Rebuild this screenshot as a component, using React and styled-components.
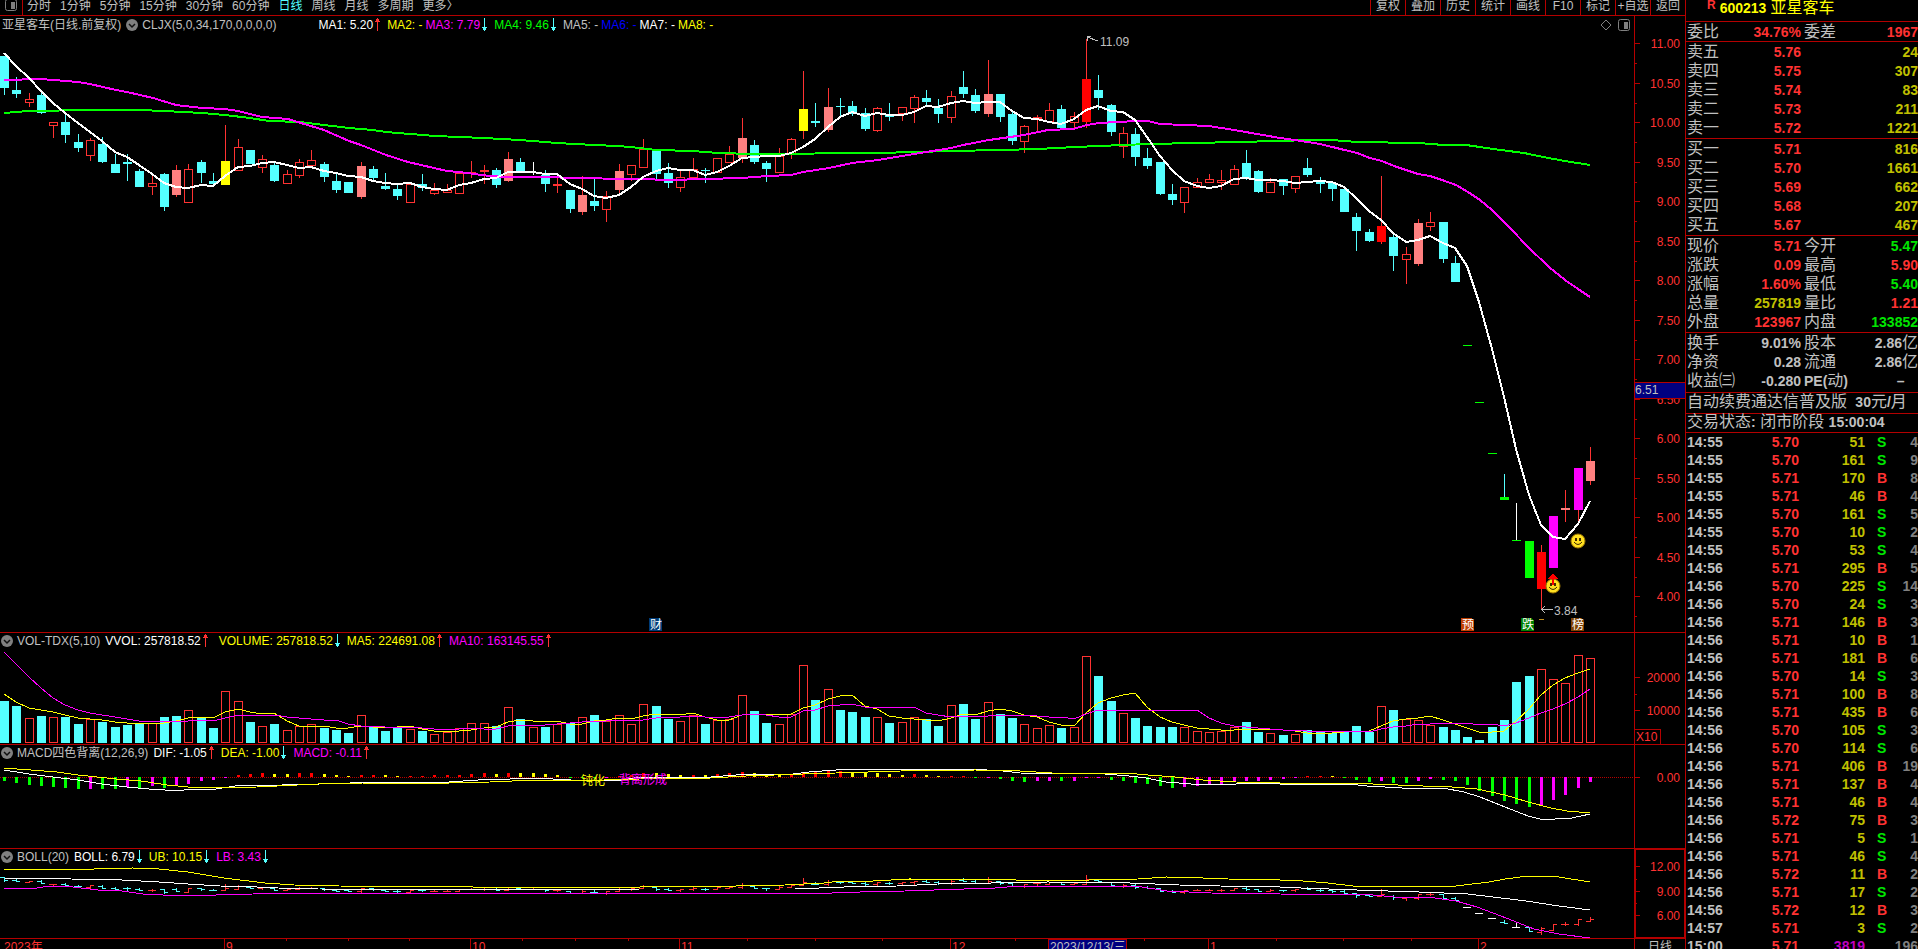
import React from "react";
import styled, { createGlobalStyle } from "styled-components";

const RED = "#ff3232";
const LINE = "#b40000";
const CYAN = "#54ffff";
const PINK = "#ff8080";
const GREY = "#c0c0c0";
const GOLD = "#c0c000";
const GREEN = "#00e600";
const LIME = "#00ff00";
const MAGENTA = "#ff00ff";

const STEP = 12.295;
const cx = (i) => Math.round(4 + i * STEP);

// kind + high, body top, body bottom, low
const candles = `c56,56,88,95 c77,90,94,98 r93,99,102,107 c91,95,113,114 r122,122,125,138
c112,122,135,143 c134,142,148,152 r138,140,155,161 c137,144,162,163 c154,164,173,173
c154,162,164,181 c169,171,187,187 r176,183,186,195 c173,174,207,211 p165,170,195,197
r164,169,202,202 c160,162,173,183 c173,181,184,185 y125,161,185,185 r139,147,170,171
c150,150,164,164 r155,159,167,173 c163,165,181,182 r170,174,183,184 r159,162,175,178
r150,160,165,167 c162,164,177,182 c173,181,190,193 c182,182,193,193 p162,166,197,199
c166,169,178,181 c173,186,189,190 c184,189,196,200 r183,184,202,203 c174,184,188,191
r183,190,193,195 r184,190,192,193 r173,173,193,193 x161,172,174,178 x165,170,172,184
c168,170,185,188 p152,159,181,182 c158,162,172,172 w162,172,173,175 c170,175,184,192
x176,184,186,193 c190,190,209,213 p176,195,212,215 c179,201,206,211 r191,196,209,222
p164,171,190,195 r165,165,174,181 r139,149,167,168 c149,151,174,179 c163,173,183,188
r170,177,187,192 r158,169,177,179 c168,170,171,183 r158,158,172,172 r146,154,162,163
p118,138,158,163 c140,145,162,164 c161,163,169,182 r148,156,172,172 r138,139,153,159
y71,109,131,139 c103,121,123,127 p88,107,130,132 c98,106,107,116 c101,106,114,116
c108,113,129,131 r107,108,130,132 c103,114,117,121 r107,107,113,121 r95,97,108,123
c90,98,102,107 c99,108,114,123 r91,96,117,123 c71,87,94,98 c89,95,111,113
p60,94,114,117 c94,94,117,122 c110,114,141,145 r125,126,141,153 x115,117,119,132
r103,110,121,122 c105,109,128,129 r112,116,122,128 R39,79,122,128 c75,90,98,110
c104,105,132,136 r127,133,146,158 c128,134,157,166 c148,158,166,169 c162,162,194,195
c184,194,200,205 r187,187,202,213 r178,182,187,188 r174,179,182,183 r170,180,182,190
r165,169,184,184 c150,163,178,180 c170,171,192,193 r178,182,192,192 c179,179,186,195
r176,176,188,193 c158,168,175,177 c177,180,184,193 c183,183,189,201 c187,189,212,212
c213,217,231,251 c229,232,241,242 R176,226,242,244 c235,237,256,271 r247,254,259,284
p219,223,264,266 r212,222,226,231 c222,222,259,263 c256,263,282,282 g345,345,346,346
g402,402,403,403 g453,453,454,454 C474,497,500,500 W503,540,541,541 g541,541,578,578
R545,552,589,609 m516,516,568,568 P490,508,510,522 m468,468,510,521 p447,461,481,485`
  .split(/\s+/)
  .map((s, i) => {
    const [high, top, bottom, low] = s.slice(1).split(",").map(Number);
    const kind = s[0];
    const down = "cgCW".includes(kind) || i === 14;
    return { kind, high, top, bottom, low, down, close: down ? bottom : top, open: down ? top : bottom };
  });

const volumes = [
  126, 111, 75, 81, 78, 78, 57, 72, 63, 48, 54, 58, 60, 78, 81, 99, 78, 45, 156, 126,
  63, 51, 57, 39, 51, 56, 45, 39, 30, 83, 48, 36, 46, 42, 36, 27, 33, 45, 59, 59,
  51, 107, 72, 48, 48, 58, 60, 77, 84, 66, 83, 57, 116, 111, 72, 66, 83, 57, 69, 71,
  143, 96, 60, 57, 86, 233, 129, 161, 99, 93, 78, 77, 60, 63, 77, 72, 51, 114, 117, 72,
  122, 87, 75, 57, 45, 53, 45, 48, 260, 201, 126, 89, 75, 51, 48, 48, 48, 36, 32, 36,
  48, 63, 33, 29, 24, 27, 39, 33, 29, 32, 51, 32, 110, 99, 71, 68, 53, 48, 39, 18,
  9, 48, 69, 183, 201, 221, 191, 179, 263, 254,
];

// colour + signed length, below the zero line is positive
const macd = `g11 g17 g23 g26 g29 g32 g35 m35 g35 g35 m30 g32 m28 g32 m26 m20 m11 m8 m2 R-7
R-10 R-13 y-10 y-10 R-13 R-13 y-10 y-7 y-4 R-7 R-7 y-7 y-4 R-4 R-4 R-7 R-7 R-7 R-10 R-13
y-10 R-13 y-13 y-13 y-10 y-7 g2 g2 g3 m4 R-3 R-5 R-13 y-13 y-10 y-7 R-7 y-7 R-10 R-13
R-16 y-13 y-7 y-5 R-10 R-16 R-16 R-18 R-19 y-13 y-13 y-13 y-10 y-7 R-10 y-7 y-4 R-4 R-4 g2
m2 g5 g11 g14 m11 m11 g11 m11 m2 m2 g8 g11 g17 g20 g26 g32 m29 m26 m23 m20
m14 m11 m11 m8 m5 m2 R-4 R-4 y-4 g4 g8 g14 m11 g17 g17 m11 m5 g8 g11 g23
g41 g56 g71 g80 g89 m83 m68 m53 m32 m14`
  .split(/\s+/)
  .map((s) => ({ kind: s[0], value: Number(s.slice(1)) }));

const fills = {
  c: CYAN, p: PINK, y: "#ffff00", R: "#ff0000", m: MAGENTA, g: LIME,
  w: "#ffffff", x: RED, C: LIME, W: LIME, P: PINK,
};
const wicks = { c: CYAN, C: CYAN, g: LIME, w: "#ffffff", W: "#ffffff" };

const average = (values, before, n) => {
  const all = [...before, ...values];
  return values.map((_, i) => {
    const end = i + before.length + 1;
    const part = all.slice(Math.max(0, end - n), end);
    return part.reduce((a, b) => a + b, 0) / part.length;
  });
};

const toPoints = (values, scale = (v) => v) =>
  values.map((v, i) => `${cx(i)},${Math.round(scale(v))}`).join(" ");

const ma5 = average(candles.map((c) => c.close), [31, 39, 48, 61], 5);
const earlier = [471, 445, 431, 358, 285, 226, 165, 111, 102];
const volMa5 = average(volumes, earlier, 5);
const volMa10 = average(volumes, earlier, 10);

const ma34 =
  "4,80 41,79 78,82 90,84 116,90 127,92 153,98 176,105 202,108 225,109 238,111 262,117 288,119 301,123 324,130 349,141 361,145 386,155 408,162 447,171 459,172 490,176 506,177 557,177 563,178 640,179 669,180 705,179 742,178 767,176 791,175 803,172 829,168 852,163 878,160 914,154 951,148 963,145 989,140 1024,135 1048,130 1073,129 1087,125 1099,123 1136,121 1148,121 1160,124 1209,126 1234,130 1280,138 1295,140 1320,144 1357,153 1370,158 1382,161 1394,166 1418,174 1430,176 1442,180 1456,185 1468,192 1480,200 1492,210 1510,228 1528,247 1549,267 1565,280 1578,289 1590,297";
const ma170 =
  "4,113 16,112 29,111 90,110 139,110 165,111 202,113 225,115 250,118 269,121 300,122 324,125 349,128 373,130 386,132 435,136 484,138 520,140 557,143 594,145 618,146 640,148 656,150 693,151 718,153 754,154 878,153 952,151 1000,150 1038,149 1075,147 1099,146 1148,144 1197,143 1234,142 1280,141 1308,140 1332,140 1357,142 1418,143 1444,145 1466,145 1480,147 1493,149 1524,153 1543,157 1565,161 1590,165";
const dif =
  "4,770 29,774 53,777 78,780 102,784 127,787 149,789 165,790 184,790 216,789 235,786 282,785 320,784 380,782 449,782 478,780 510,779 535,778 571,780 616,781 640,777 711,777 736,775 793,774 809,772 836,770 852,769 970,769 1003,771 1020,773 1081,774 1105,774 1129,776 1146,778 1166,782 1191,784 1236,784 1252,783 1280,784 1348,784 1367,786 1402,788 1443,788 1464,792 1480,797 1505,807 1528,816 1540,819 1555,819 1572,818 1590,814";
const dea =
  "4,768 57,772 78,775 116,779 141,781 167,785 188,787 216,788 257,787 318,784 363,783 449,783 490,782 535,780 604,780 640,779 711,778 746,776 803,774 836,773 901,771 975,770 1020,771 1052,773 1126,773 1148,775 1175,777 1203,780 1236,782 1280,783 1357,783 1373,784 1423,786 1452,787 1477,789 1505,795 1528,802 1551,808 1567,811 1590,813";
const upper =
  "4,869 94,869 133,868 159,869 188,872 224,878 265,883 294,885 339,886 473,887 640,887 736,886 785,885 824,883 840,881 873,881 909,879 1016,880 1089,880 1138,879 1166,877 1203,878 1228,879 1280,880 1303,881 1328,883 1353,886 1456,886 1489,882 1505,879 1528,876 1559,877 1590,882";
const middle =
  "4,878 71,879 122,880 159,882 188,884 220,886 257,887 278,888 318,889 563,890 640,889 795,889 844,887 897,886 958,883 991,883 1048,882 1130,883 1179,885 1220,886 1280,887 1301,888 1357,890 1419,892 1468,894 1493,897 1526,901 1559,906 1590,910";
const lower =
  "4,888 37,888 49,886 73,887 98,890 122,891 143,894 163,895 216,895 253,894 282,893 640,893 832,893 860,892 905,891 934,890 995,888 1020,886 1118,886 1142,887 1167,891 1211,893 1280,894 1315,895 1342,894 1373,895 1394,897 1435,898 1456,901 1477,907 1501,916 1534,929 1559,934 1590,938";

const Candle = ({ data, x }) => {
  const { kind, high, top, bottom, low } = data;
  const wick = wicks[kind] || RED;
  const doji = kind === "w";
  return (
    <g>
      {high < top && <rect x={x} y={high} width="1" height={top - high} fill={wick} />}
      {low > bottom && <rect x={x} y={bottom} width="1" height={low - bottom} fill={wick} />}
      {kind === "r" ? (
        <rect x={x - 3.5} y={top + 0.5} width="8" height={Math.max(bottom - top, 2)} fill="none" stroke={RED} />
      ) : (
        <rect
          x={doji ? x : x - 4}
          y={top}
          width={doji ? 1 : 9}
          height={Math.max(bottom - top, 1)}
          fill={fills[kind]}
        />
      )}
    </g>
  );
};

const Smiley = ({ x, y }) => (
  <g shapeRendering="auto">
    <circle cx={x} cy={y} r="7" fill="#ffe020" stroke="#a07800" />
    <rect x={x - 3} y={y - 3} width="2" height="3" fill="#402800" />
    <rect x={x + 1} y={y - 3} width="2" height="3" fill="#402800" />
    <path d={`M${x - 4} ${y + 1}q4 5 8 0`} fill="none" stroke="#402800" />
  </g>
);

const Badge = ({ x, y = 618, fill, children }) => (
  <g>
    <path d={`M${x} ${y}h10l3 3v10h-13z`} fill={fill} />
    <text x={x + 1} y={y + 11} fill="#ffffff">{children}</text>
  </g>
);

const PriceChart = () => (
  <Canvas $height={598}>
    <g transform="translate(0 -34)">
      {candles.map((c, i) => <Candle key={i} data={c} x={cx(i)} />)}
      <polyline points={ma170} stroke={LIME} strokeWidth="2" fill="none" />
      <polyline points={ma34} stroke={MAGENTA} strokeWidth="2" fill="none" />
      <polyline points={toPoints(ma5)} stroke="#ffffff" strokeWidth="2" fill="none" />
      <path d="M1098 41L1087 37M1087.5 41V36.5H1091" stroke={GREY} fill="none" />
      <text x="1100" y="46" fill={GREY}>11.09</text>
      <path d="M1541 609.5H1553M1545 606L1541.5 609.5L1545 613" stroke={GREY} fill="none" />
      <text x="1554" y="615" fill={GREY}>3.84</text>
      <Smiley x={1578} y={541} />
      <Smiley x={1553} y={586} />
      <path d="M1553 573l5 6h-4v6h-2v-6h-4z" fill="#ff0000" />
      <rect x="1539" y="619" width="5" height="1" fill="#c09020" />
      <Badge x={649} fill="#003c78">财</Badge>
      <Badge x={1461} fill="#c04000">预</Badge>
      <Badge x={1521} fill="#008000">跌</Badge>
      <Badge x={1571} fill="#804000">榜</Badge>
    </g>
  </Canvas>
);

const VolumeChart = () => (
  <Canvas $height={94}>
    <g transform="translate(0 -650)">
      {volumes.map((v, i) => {
        const h = Math.round(v / 3);
        return candles[i].down ? (
          <rect key={i} x={cx(i) - 4} y={743 - h} width="9" height={h} fill={CYAN} />
        ) : (
          <rect key={i} x={cx(i) - 3.5} y={743.5 - h} width="8" height={h - 1} fill="none" stroke={RED} />
        );
      })}
      <polyline points={toPoints(volMa5, (v) => 743 - v / 3)} stroke="#ffff00" fill="none" />
      <polyline points={toPoints(volMa10, (v) => 743 - v / 3)} stroke={MAGENTA} fill="none" />
    </g>
  </Canvas>
);

const MacdChart = () => (
  <Canvas $height={86}>
    <g transform="translate(0 -762)">
      <line x1="0" x2="1634" y1="777.5" y2="777.5" stroke={LINE} strokeDasharray="1 1" />
      {macd.map(({ kind, value }, i) => {
        const h = Math.max(1, Math.round(Math.abs(value) / 3));
        return <rect key={i} x={cx(i) - 1} y={value > 0 ? 777 : 777 - h} width="3" height={h} fill={fills[kind]} />;
      })}
      <polyline points={dif} stroke="#ffffff" fill="none" />
      <polyline points={dea} stroke="#ffff00" fill="none" />
      <text x="581" y="785" fill="#ffff00">钝化</text>
      <text x="619" y="784" fill={MAGENTA}>背离形成</text>
    </g>
  </Canvas>
);

const bandY = (y) => Math.round(875.5 + (y - 43.3) * 0.1034);

const BollChart = () => (
  <Canvas $height={72}>
    <g transform="translate(0 -866)">
      {candles.map((c, i) => {
        const x = cx(i);
        const color = i > 118 && i < 124 && i !== 122 ? "#ffffff" : c.down ? CYAN : RED;
        const high = bandY(c.high);
        return (
          <g key={i} fill={color}>
            <rect x={x} y={high} width="1" height={bandY(c.low) - high + 1} />
            <rect x={x - 4} y={bandY(c.open)} width="4" height="1" />
            <rect x={x} y={bandY(c.close)} width="4" height="1" />
          </g>
        );
      })}
      <polyline points={middle} stroke="#ffffff" fill="none" />
      <polyline points={upper} stroke="#ffff00" fill="none" />
      <polyline points={lower} stroke={MAGENTA} fill="none" />
    </g>
  </Canvas>
);

const Scale = ({ height, marks, minor = [], children }) => (
  <Canvas $height={height}>
    {marks.map(([label, y]) => (
      <g key={label}>
        <rect x="0" y={y} width="5" height="1" fill={LINE} />
        <text x="45" y={y + 5} textAnchor="end" fill={RED}>{label}</text>
      </g>
    ))}
    {minor.map((y) => <rect key={y} x="0" y={y} width="2" height="1" fill={LINE} />)}
    {children}
  </Canvas>
);

const priceMarks = Array.from({ length: 15 }, (_, i) => [
  (11 - i / 2).toFixed(2),
  Math.round(27 + i * 39.5),
]);
const priceMinor = Array.from({ length: 15 }, (_, i) => Math.round(47 + i * 39.5));

const Arrow = ({ up }) => (
  <svg width="8" height="14" viewBox="0 0 8 14" shapeRendering="crispEdges" aria-hidden="true">
    {up ? (
      <path d="M3 0h1v1h1v2h1v1h-2v9h-1v-9h-2v-1h1v-2h1z" fill={RED} />
    ) : (
      <path d="M3 0h1v9h2v1h-1v2h-1v1h-1v-1h-1v-2h-1v-1h2z" fill={CYAN} />
    )}
  </svg>
);

const Fold = () => (
  <FoldButton aria-label="指标菜单">
    <svg width="12" height="12" viewBox="0 0 12 12">
      <circle cx="6" cy="6" r="6" fill="#808080" />
      <path d="M3 5l3 3 3-3" stroke="#101010" strokeWidth="1.5" fill="none" />
    </svg>
  </FoldButton>
);

const PanelIcon = () => (
  <svg width="12" height="12" viewBox="0 0 12 12" aria-hidden="true">
    <rect x="0.5" y="0.5" width="11" height="11" rx="2" fill="none" stroke="#808080" />
    <rect x="6" y="3" width="4" height="7" fill="#808080" />
  </svg>
);

const Indicators = ({ items }) =>
  items.map(([text, color, dir, space = 5]) => (
    <Value key={text} $color={color} $space={space}>
      {text}
      {dir && <Arrow up={dir === "up"} />}
    </Value>
  ));

const periods = ["分时", "1分钟", "5分钟", "15分钟", "30分钟", "60分钟", "日线", "周线", "月线", "多周期", "更多〉"];
const actions = ["复权", "叠加", "历史", "统计", "画线", "F10", "标记", "+自选", "返回"];

const months = [["9", 224], ["10", 470], ["11", 679], ["12", 950], ["1", 1208], ["2", 1478]];
const weeks = [286, 348, 409, 522, 575, 628, 747, 815, 882, 1015, 1144, 1276, 1343, 1411];

const sells = [["卖五", "5.76", 24], ["卖四", "5.75", 307], ["卖三", "5.74", 83], ["卖二", "5.73", 211], ["卖一", "5.72", 1221]];
const buys = [["买一", "5.71", 816], ["买二", "5.70", 1661], ["买三", "5.69", 662], ["买四", "5.68", 207], ["买五", "5.67", 467]];

const prices = [
  ["现价", "5.71", RED, "今开", "5.47", GREEN],
  ["涨跌", "0.09", RED, "最高", "5.90", RED],
  ["涨幅", "1.60%", RED, "最低", "5.40", GREEN],
  ["总量", "257819", GOLD, "量比", "1.21", RED],
  ["外盘", "123967", RED, "内盘", "133852", GREEN],
];
const basics = [
  ["换手", "9.01%", GREY, "股本", "2.86", GREY, "亿"],
  ["净资", "0.28", GREY, "流通", "2.86", GREY, "亿"],
  ["收益㈢", "-0.280", GREY, <><b>PE(</b>动<b>)</b></>, "–", GREY, "\u00a0\u00a0\u00a0"],
];

const trades = `14:55 5.70 51 S 4|14:55 5.70 161 S 9|14:55 5.71 170 B 8|14:55 5.71 46 B 4|14:55 5.70 161 S 5
14:55 5.70 10 S 2|14:55 5.70 53 S 4|14:56 5.71 295 B 5|14:56 5.70 225 S 14|14:56 5.70 24 S 3
14:56 5.71 146 B 3|14:56 5.71 10 B 1|14:56 5.71 181 B 6|14:56 5.70 14 S 3|14:56 5.71 100 B 8
14:56 5.71 435 B 6|14:56 5.70 105 S 3|14:56 5.70 114 S 6|14:56 5.71 406 B 19|14:56 5.71 137 B 4
14:56 5.71 46 B 4|14:56 5.72 75 B 3|14:56 5.71 5 S 1|14:56 5.71 46 S 4|14:56 5.72 11 B 2
14:56 5.71 17 S 2|14:56 5.72 12 B 3|14:57 5.71 3 S 2|15:00 5.71 3819 - 196`
  .split(/[|\n]/)
  .map((s) => s.split(" "));

const QuoteRows = ({ rows, space = 1 }) => (
  <Quotes $space={space}>
    <colgroup>
      <col width="50" />
      <col width="65" />
      <col width="44" />
      <col />
    </colgroup>
    <tbody>
      {rows.map(([label, value, color, label2, value2, color2, unit], i) => (
        <tr key={i}>
          <Label>{label}</Label>
          <Num $color={color}>{value}</Num>
          <Label $second>{label2}</Label>
          <Num $color={color2}>
            {value2}
            {unit && <Cjk>{unit}</Cjk>}
          </Num>
        </tr>
      ))}
    </tbody>
  </Quotes>
);

const App = () => {
  return (
    <Screen>
      <GlobalStyle />
      <Charts>
        <Toolbar>
          <LayoutButton aria-label="布局"><PanelIcon /></LayoutButton>
          <Periods>
            {periods.map((p) => <Period key={p} $active={p === "日线"}>{p}</Period>)}
          </Periods>
          {actions.map((a) => <Action key={a}>{a}</Action>)}
        </Toolbar>

        <Pane>
          <Plot>
            <Header $tall>
              <Title $first>亚星客车(日线.前复权)</Title>
              <Fold />
              <Title>CLJX(5,0,34,170,0,0,0,0)</Title>
              <Indicators
                items={[
                  ["MA1: 5.20", "#ffffff", "up", 42],
                  ["MA2: -", "#ffff00"],
                  ["MA3: 7.79", MAGENTA, "down", 3],
                  ["MA4: 9.46", LIME, "down"],
                  ["MA5: -", GREY],
                  ["MA6: -", "#0000ff", null, 3],
                  ["MA7: -", "#ffffff", null, 3],
                  ["MA8: -", "#ffff00", null, 3],
                ]}
              />
              <Tools>
                <svg width="12" height="12" viewBox="0 0 12 12" aria-hidden="true">
                  <path d="M6 1l5 5-5 5-5-5z" fill="none" stroke="#808080" />
                </svg>
                <PanelIcon />
              </Tools>
            </Header>
            <PriceChart />
          </Plot>
          <Axis>
            <Scale height={616} marks={priceMarks} minor={priceMinor}>
              <rect x="0" y="366" width="50" height="17" fill={LINE} />
              <rect x="0" y="367" width="50" height="15" fill="#000080" />
              <text x="0" y="378" fill={GREY}>6.51</text>
            </Scale>
          </Axis>
        </Pane>

        <Pane>
          <Plot>
            <Header>
              <Fold />
              <Title>VOL-TDX(5,10)</Title>
              <Indicators
                items={[
                  ["VVOL: 257818.52", "#ffffff", "up"],
                  ["VOLUME: 257818.52", "#ffff00", "down", 9],
                  ["MA5: 224691.08", "#ffff00", "up"],
                  ["MA10: 163145.55", MAGENTA, "up"],
                ]}
              />
            </Header>
            <VolumeChart />
          </Plot>
          <Axis>
            <Scale height={111} marks={[["20000", 44], ["10000", 77]]} minor={[61]}>
              <path d="M0 96.5H25.5V111" stroke={LINE} fill="none" />
              <text x="1" y="108" fill={RED}>X10</text>
            </Scale>
          </Axis>
        </Pane>

        <Pane>
          <Plot>
            <Header>
              <Fold />
              <Title>MACD四色背离(12,26,9)</Title>
              <Indicators
                items={[
                  ["DIF: -1.05", "#ffffff", "up"],
                  ["DEA: -1.00", "#ffff00", "down"],
                  ["MACD: -0.11", MAGENTA, "up"],
                ]}
              />
            </Header>
            <MacdChart />
          </Plot>
          <Axis>
            <Scale height={103} marks={[["0.00", 32]]} />
          </Axis>
        </Pane>

        <Pane>
          <Plot>
            <Header>
              <Fold />
              <Title>BOLL(20)</Title>
              <Indicators
                items={[
                  ["BOLL: 6.79", "#ffffff", "down"],
                  ["UB: 10.15", "#ffff00", "down"],
                  ["LB: 3.43", MAGENTA, "down"],
                ]}
              />
            </Header>
            <BollChart />
          </Plot>
          <Axis $selected>
            <Scale height={87} marks={[["12.00", 17], ["9.00", 42], ["6.00", 66]]} minor={[30, 54]} />
          </Axis>
        </Pane>

        <Pane>
          <Canvas $height={20}>
            {months.map(([m, x]) => (
              <g key={m}>
                <rect x={x} y="0" width="1" height="20" fill={LINE} />
                <text x={x + 2} y="12" fill={RED}>{m}</text>
              </g>
            ))}
            {weeks.map((x) => <rect key={x} x={x} y="0" width="1" height="2" fill={LINE} />)}
            <text x="4" y="12" fill={RED}>2023年</text>
            <rect x="1048" y="0" width="79" height="20" fill={LINE} />
            <rect x="1049" y="1" width="77" height="19" fill="#000080" />
            <text x="1050" y="12" fill={GREY}>2023/12/13/三</text>
          </Canvas>
          <Axis><Cycle>日线</Cycle></Axis>
        </Pane>
      </Charts>

      <Side>
        <Stock>
          <Flag>R</Flag>
          600213
          <Cjk>亚星客车</Cjk>
        </Stock>
        <QuoteRows rows={[["委比", "34.76%", RED, "委差", "1967", RED]]} space={0} />
        <QuoteRows rows={sells.map(([l, p, v]) => [l, p, RED, "", v, GOLD])} />
        <QuoteRows rows={buys.map(([l, p, v]) => [l, p, RED, "", v, GOLD])} />
        <QuoteRows rows={prices} />
        <QuoteRows rows={basics} space={2} />
        <Notice $height={20}>自动续费通达信普及版 <b>&nbsp;30</b>元<b>/</b>月</Notice>
        <Notice $height={18}>交易状态<b>:</b> 闭市阶段 <b>15:00:04</b></Notice>
        <Trades>
          <colgroup>
            <col width="50" />
            <col width="63" />
            <col width="66" />
            <col width="27" />
            <col />
          </colgroup>
          <tbody>
            {trades.map(([time, price, vol, side, count], i) => (
              <tr key={i}>
                <td>{time}</td>
                <Num $color={RED}>{price}</Num>
                <Num $color={vol === "3819" ? "#c000c0" : GOLD}>{vol}</Num>
                <Way $color={side === "B" ? RED : GREEN}>{side === "-" ? "" : side}</Way>
                <Num $color="#808080">{count}</Num>
              </tr>
            ))}
          </tbody>
        </Trades>
      </Side>
    </Screen>
  );
};

export default App;

const GlobalStyle = createGlobalStyle`
  body {
    margin: 0;
    background: #000;
    color: ${GREY};
    font: 12px/14px "Liberation Sans", "Noto Sans CJK SC", sans-serif;
    overflow: hidden;
  }

  button {
    border: 0;
    padding: 0;
    background: none;
    color: inherit;
    font: inherit;
    white-space: nowrap;
  }
`;

const Screen = styled.div`
  display: grid;
  grid-template-columns: minmax(0, 1fr) 233px;
  height: 100vh;
  overflow: hidden;
`;

const Charts = styled.main`
  min-width: 0;
`;

const Toolbar = styled.nav`
  display: flex;
  height: 15px;
  line-height: 12px;
  overflow: hidden;
  border-bottom: 1px solid ${LINE};
`;

const LayoutButton = styled.button`
  width: 22px;
  height: 11px;
  display: flex;
  align-items: flex-end;
  justify-content: center;
`;

const Periods = styled.div`
  display: flex;
  flex: 1;
  gap: 9px;
  padding-left: 4px;
  border-left: 1px solid ${LINE};
`;

const Period = styled.button`
  height: 12px;
  color: ${(p) => (p.$active ? CYAN : GREY)};
`;

const Action = styled.button`
  width: 35px;
  border-left: 1px solid ${LINE};
  padding-bottom: 3px;
`;

const Pane = styled.section`
  display: grid;
  grid-template-columns: minmax(0, 1fr) 51px;
  border-bottom: 1px solid ${LINE};
`;

const Plot = styled.div`
  min-width: 0;
`;

const Axis = styled.div`
  box-sizing: border-box;
  border-left: 1px solid ${LINE};
  ${(p) => p.$selected && `box-shadow: inset 0 0 0 1px ${LINE};`}
`;

const Canvas = styled.svg`
  display: block;
  width: 100%;
  height: ${(p) => p.$height}px;
  overflow: hidden;
  shape-rendering: crispEdges;
  font-size: 12px;
`;

const Header = styled.header`
  display: flex;
  align-items: center;
  box-sizing: border-box;
  height: ${(p) => (p.$tall ? 18 : 17)}px;
  padding-bottom: ${(p) => (p.$tall ? 0 : 2)}px;
  white-space: nowrap;
`;

const FoldButton = styled.button`
  display: flex;
  margin: 0 4px 0 1px;
`;

const Title = styled.span`
  margin-left: ${(p) => (p.$first ? 2 : 0)}px;
  margin-right: ${(p) => (p.$first ? 4 : 0)}px;
`;

const Value = styled.span`
  display: flex;
  align-items: center;
  margin-left: ${(p) => p.$space}px;
  color: ${(p) => p.$color};

  svg {
    margin-left: 1px;
  }
`;

const Tools = styled.span`
  display: flex;
  gap: 6px;
  margin-left: auto;
  padding-right: 4px;
`;

const Cycle = styled.button`
  display: block;
  margin: 0 auto;
  line-height: 16px;
`;

const Side = styled.aside`
  border-left: 1px solid ${LINE};
  font-size: 14px;
  overflow: hidden;
`;

const Stock = styled.h1`
  display: flex;
  align-items: center;
  height: 21px;
  margin: 0;
  padding: 0 0 5px 21px;
  box-sizing: border-box;
  font-size: 14px;
  color: #ffff00;
  gap: 4px;
`;

const Flag = styled.sup`
  font-size: 12px;
  line-height: 10px;
  align-self: flex-start;
  color: ${RED};
`;

const Cjk = styled.span`
  font-size: 16px;
  font-weight: normal;
  line-height: 14px;
`;

const Quotes = styled.table`
  width: 100%;
  table-layout: fixed;
  border-collapse: separate;
  border-spacing: 0;
  border-top: 1px solid ${LINE};
  padding-bottom: ${(p) => p.$space}px;
  line-height: 18px;

  td,
  th {
    height: 19px;
    padding: 0;
    white-space: nowrap;
  }
`;

const Label = styled.th`
  font-size: 16px;
  font-weight: normal;
  text-align: left;
  text-indent: ${(p) => (p.$second ? 3 : 1)}px;
  line-height: 16px;

  b {
    font-size: 14px;
    line-height: 14px;
  }
`;

const Num = styled.td`
  color: ${(p) => p.$color};
  font-weight: bold;
  text-align: right;
`;

const Notice = styled.p`
  height: ${(p) => p.$height}px;
  line-height: ${(p) => p.$height - 2}px;
  margin: 0;
  padding-left: 1px;
  border-top: 1px solid ${LINE};
  font-size: 16px;
  white-space: nowrap;

  b {
    font-size: 14px;
  }
`;

const Trades = styled.table`
  width: 100%;
  table-layout: fixed;
  border-spacing: 0;
  border-top: 1px solid ${LINE};
  font-weight: bold;
  line-height: 16px;

  td {
    height: 18px;
    padding: 0;
  }

  td:first-child {
    text-indent: 1px;
  }
`;

const Way = styled.td`
  color: ${(p) => p.$color};
  text-indent: 12px;
`;
